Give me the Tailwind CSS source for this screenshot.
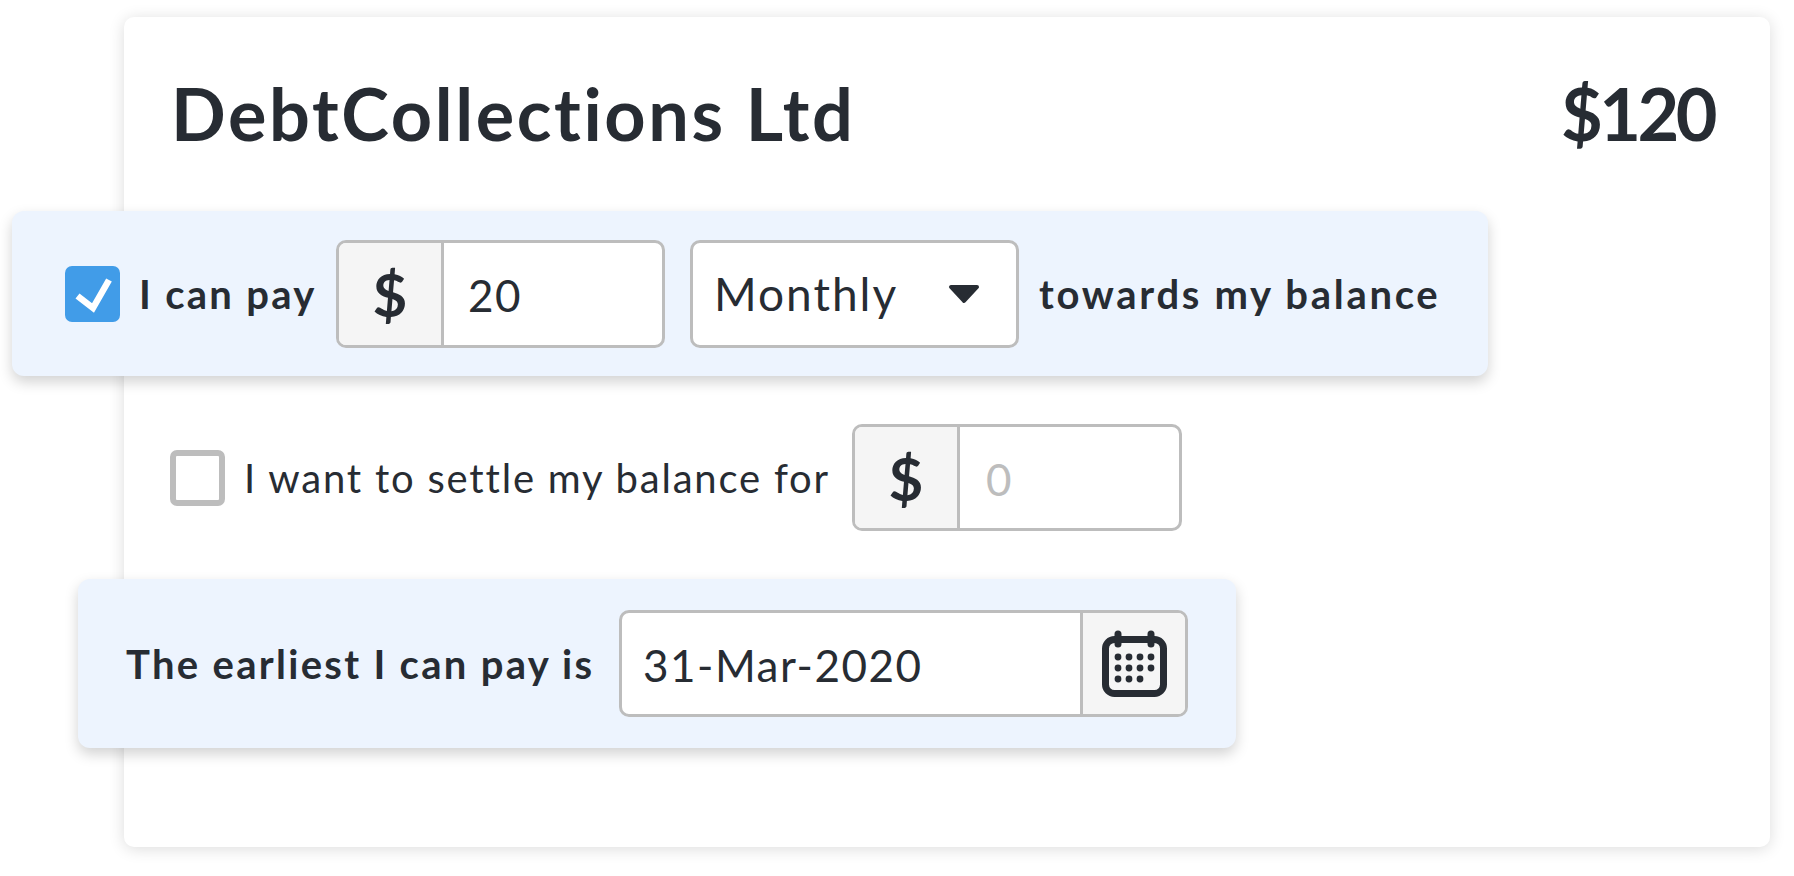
<!DOCTYPE html>
<html lang="en">
  <head>
    <meta charset="UTF-8" />
    <title>Payment offer</title>
    <script src="https://cdn.jsdelivr.net/npm/@tailwindcss/browser@4"></script>
  </head>
  <body class="bg-white text-[#272c33] font-['Lato',sans-serif] [font-variant-ligatures:none] overflow-hidden">
    <div class="w-[1794px] h-[876px] pt-[17px] pl-[124px]">
      <!-- Card -->
      <div class="w-[1646px] h-[830px] bg-white rounded-[10px] shadow-[0_2px_16px_rgba(0,0,0,0.14)] pt-[48px]">
        <div class="flex justify-between items-center h-[96px] pl-[47px] pr-[56px] text-[72px] font-bold leading-none">
          <h1 class="tracking-[2.6px]">DebtCollections Ltd</h1>
          <span class="tracking-[-3.5px]">$120</span>
        </div>

        <!-- Monthly payment -->
        <div class="flex items-center w-[1476px] h-[165px] mt-[50px] -ml-[112px] pl-[53px] bg-[#edf4fe] rounded-[12px] shadow-[0_6px_14px_rgba(0,0,0,0.18)]">
          <span class="flex items-center justify-center w-[55px] h-[56px] bg-[#419ce8] rounded-[7px]">
            <svg width="55" height="56" viewBox="0 0 55 56" fill="none"><path d="M12.5 30 28 42 44 14" stroke="#fff" stroke-width="6.5"/></svg>
          </span>
          <span class="ml-[19px] w-[197px] text-[40px] font-bold tracking-[2.3px]">I can pay</span>
          <div class="flex w-[329px] h-[108px] border-[3px] border-[#bdbdbd] rounded-[10px] overflow-hidden bg-white">
            <span class="flex items-center justify-center w-[105px] bg-[#f5f5f5] border-r-[3px] border-[#bdbdbd] text-[60px] font-bold">$</span>
            <input value="20" class="flex-1 min-w-0 pl-[24px] pt-[2px] text-[44px] tracking-[1.5px] outline-none" />
          </div>
          <div class="flex items-center justify-between w-[329px] h-[108px] ml-[25px] pl-[21px] pr-[36px] border-[3px] border-[#bdbdbd] rounded-[10px] bg-white text-[46px] tracking-[2px]">
            <span>Monthly</span>
            <svg width="32" height="20" viewBox="0 0 32 20"><path d="M3 3H29L16 17Z" fill="#272c33" stroke="#272c33" stroke-width="4" stroke-linejoin="round"/></svg>
          </div>
          <span class="ml-[20px] text-[40px] font-bold tracking-[2.7px]">towards my balance</span>
        </div>

        <!-- Settlement -->
        <div class="flex items-center h-[107px] mt-[48px] ml-[46px]">
          <span class="w-[55px] h-[56px] border-[6px] border-[#bdbdbd] rounded-[7px] bg-white"></span>
          <span class="ml-[19px] w-[608px] text-[40px] tracking-[1.8px]">I want to settle my balance for</span>
          <div class="flex w-[330px] h-[107px] border-[3px] border-[#bdbdbd] rounded-[10px] overflow-hidden bg-white">
            <span class="flex items-center justify-center w-[105px] bg-[#f5f5f5] border-r-[3px] border-[#bdbdbd] text-[60px] font-bold">$</span>
            <input placeholder="0" class="flex-1 min-w-0 pl-[26px] pt-[2px] text-[44px] outline-none placeholder:text-[#bdbdbd]" />
          </div>
        </div>

        <!-- Earliest date -->
        <div class="flex items-center w-[1158px] h-[169px] mt-[48px] -ml-[46px] pl-[48px] bg-[#edf4fe] rounded-[12px] shadow-[0_6px_14px_rgba(0,0,0,0.18)]">
          <span class="w-[493px] text-[40px] font-bold tracking-[2.3px]">The earliest I can pay is</span>
          <div class="flex w-[569px] h-[107px] border-[3px] border-[#bdbdbd] rounded-[10px] overflow-hidden bg-white">
            <input value="31-Mar-2020" class="flex-1 min-w-0 pl-[21px] pt-[2px] text-[44px] tracking-[1.5px] outline-none" />
            <span class="flex items-center justify-center w-[105px] bg-[#f5f5f5] border-l-[3px] border-[#bdbdbd]">
              <svg width="65" height="67" viewBox="0 0 65 67" fill="none">
                <rect x="3.5" y="9.5" width="58" height="54" rx="9" stroke="#272c33" stroke-width="7"/>
                <path d="M16 4V14M49 4V14" stroke="#272c33" stroke-width="7" stroke-linecap="round"/>
                <g fill="#272c33">
                  <circle cx="16" cy="27" r="3.4"/><circle cx="27" cy="27" r="3.4"/><circle cx="38" cy="27" r="3.4"/><circle cx="49" cy="27" r="3.4"/>
                  <circle cx="16" cy="38" r="3.4"/><circle cx="27" cy="38" r="3.4"/><circle cx="38" cy="38" r="3.4"/><circle cx="49" cy="38" r="3.4"/>
                  <circle cx="16" cy="49" r="3.4"/><circle cx="27" cy="49" r="3.4"/><circle cx="38" cy="49" r="3.4"/>
                </g>
              </svg>
            </span>
          </div>
        </div>
      </div>
    </div>
  </body>
</html>
